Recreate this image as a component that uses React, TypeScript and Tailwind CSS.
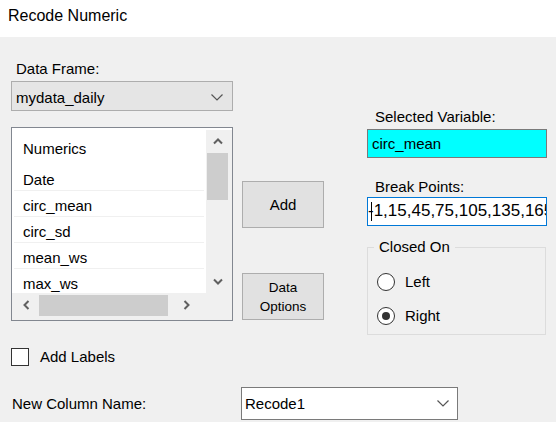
import React from 'react';

function Chevron({ dir = 'down', className = '' }: { dir?: 'up' | 'down' | 'left' | 'right'; className?: string }) {
  const paths: Record<string, string> = {
    down: 'M1 1.5 L5 5.5 L9 1.5',
    up: 'M1 5.5 L5 1.5 L9 5.5',
    left: 'M5.5 1 L1.5 5 L5.5 9',
    right: 'M1.5 1 L5.5 5 L1.5 9',
  };
  const vertical = dir === 'up' || dir === 'down';
  return (
    <svg width={vertical ? 10 : 7} height={vertical ? 7 : 10} viewBox={vertical ? '0 0 10 7' : '0 0 7 10'} className={className}>
      <path d={paths[dir]} fill="none" stroke="currentColor" strokeWidth="2" />
    </svg>
  );
}

function ComboChevron() {
  return (
    <svg width="12" height="7" viewBox="0 0 12 7" className="text-[#555]">
      <path d="M0.5 0.5 L6 6 L11.5 0.5" fill="none" stroke="currentColor" strokeWidth="1.2" />
    </svg>
  );
}

const items = ['circ_mean', 'circ_sd', 'mean_ws', 'max_ws'];

function VarList() {
  return (
    <div className="mt-[16px] h-[194px] w-[222px] border border-[#828790] bg-white flex flex-col">
      <div className="flex h-[165px]">
        <div className="w-[194px] overflow-hidden">
          <div className="pl-[11px] pt-[12px] leading-[18px]">Numerics</div>
          <div className="pl-[11px] mt-[13px] leading-[18px]">Date</div>
          <div className="mx-[2px] mt-[1px] h-px bg-[#f0f0f0]" />
          {items.map((it) => (
            <div key={it}>
              <div className="pl-[11px] pt-[6px] pb-px leading-[18px]">{it}</div>
              <div className="mx-[2px] h-px bg-[#f0f0f0]" />
            </div>
          ))}
        </div>
        <div className="w-[26px] pt-[2px] flex flex-col">
          <div className="flex-1 bg-[#f0f0f0] flex flex-col items-center pr-[3px] text-[#606060]">
            <div className="h-[23px] flex items-center justify-center">
              <Chevron dir="up" />
            </div>
            <div className="w-[21px] h-[47px] bg-[#cdcdcd]" />
            <div className="flex-1" />
            <div className="h-[23px] flex items-center justify-center">
              <Chevron dir="down" />
            </div>
          </div>
        </div>
      </div>
      <div className="flex h-[27px] bg-[#f0f0f0]">
        <div className="w-[194px] h-[24px] flex items-center text-[#606060]">
          <div className="w-[27px] flex justify-center pl-[2px]">
            <Chevron dir="left" />
          </div>
          <div className="w-[129px] h-[21px] bg-[#cdcdcd]" />
          <div className="flex-1 flex justify-center pr-[2px]">
            <Chevron dir="right" />
          </div>
        </div>
        <div className="w-[26px]" />
      </div>
    </div>
  );
}

function Radio({ label, checked }: { label: string; checked?: boolean }) {
  return (
    <div className="flex items-center h-[20px] gap-[10px]">
      <div className="size-[18px] rounded-full border-[1.5px] border-[#333] bg-white flex items-center justify-center">
        {checked && <div className="size-[8px] rounded-full bg-[#333]" />}
      </div>
      <span className="leading-[18px]">{label}</span>
    </div>
  );
}

export default function App() {
  return (
    <div className="w-[556px] h-[422px] bg-[#f0f0f0] text-black text-[15px] font-['Liberation_Sans',Arial,sans-serif] overflow-hidden">
      <div className="h-[37px] bg-white pl-[8px] pt-[6px] text-[16px] leading-[19px]">Recode Numeric</div>

      <div className="flex items-start pl-[11px]">
        {/* left column */}
        <div className="w-[222px]">
          <div className="mt-[23px] pl-[5px] leading-[18px]">Data Frame:</div>
          <div className="mt-[3px] h-[30px] border border-[#adadad] bg-[#e5e5e5] flex items-start justify-between pl-[4px] pr-[9px] pt-[7px]">
            <span className="leading-[18px]">mydata_daily</span>
            <div className="pt-[5px]">
              <ComboChevron />
            </div>
          </div>
          <VarList />
        </div>

        {/* middle buttons */}
        <div className="ml-[9px] w-[82px] flex flex-col">
          <button className="mt-[144px] h-[47px] border border-[#adadad] bg-[#e1e1e1] leading-[18px]">Add</button>
          <button className="mt-[45px] h-[47px] border border-[#adadad] bg-[#e1e1e1] text-[13.5px] leading-[19px] flex flex-col items-center justify-center">
            <span>Data</span>
            <span>Options</span>
          </button>
        </div>

        {/* right column */}
        <div className="ml-[43px] w-[180px]">
          <div className="mt-[71px] pl-[8px] leading-[18px]">Selected Variable:</div>
          <div className="mt-[3px] h-[29px] border border-[#7a7a7a] bg-[#00ffff] pl-[4px] pt-[5px] leading-[18px]">circ_mean</div>
          <div className="mt-[20px] pl-[8px] leading-[18px]">Break Points:</div>
          <div className="mt-px h-[29px] border border-[#0078d7] bg-white pt-[3px] text-[17px] leading-[20px] overflow-hidden whitespace-nowrap relative">
            -1,15,45,75,105,135,165
            <div className="absolute left-[3px] top-[4px] w-px h-[19px] bg-black" />
          </div>
          <div className="relative mt-[21px] w-[179px] h-[88px] border border-[#dcdcdc] pl-[9px] pt-[24px] flex flex-col gap-[14px]">
            <span className="absolute left-[6px] top-[-10px] px-[5px] bg-[#f0f0f0] leading-[18px]">Closed On</span>
            <Radio label="Left" />
            <Radio label="Right" checked />
          </div>
        </div>
      </div>

      <div className="mt-[12px] pl-[11px] flex items-center h-[20px] gap-[11px]">
        <div className="size-[18px] border-[1.5px] border-[#333] bg-white" />
        <span className="leading-[18px]">Add Labels</span>
      </div>

      <div className="mt-[20px] flex items-center h-[33px]">
        <div className="w-[241px] pl-[12px] leading-[18px]">New Column Name:</div>
        <div className="w-[217px] h-[33px] border border-[#7a7a7a] bg-white flex items-center justify-between pl-[3px] pr-[8px]">
          <span className="leading-[18px]">Recode1</span>
          <ComboChevron />
        </div>
      </div>
    </div>
  );
}
